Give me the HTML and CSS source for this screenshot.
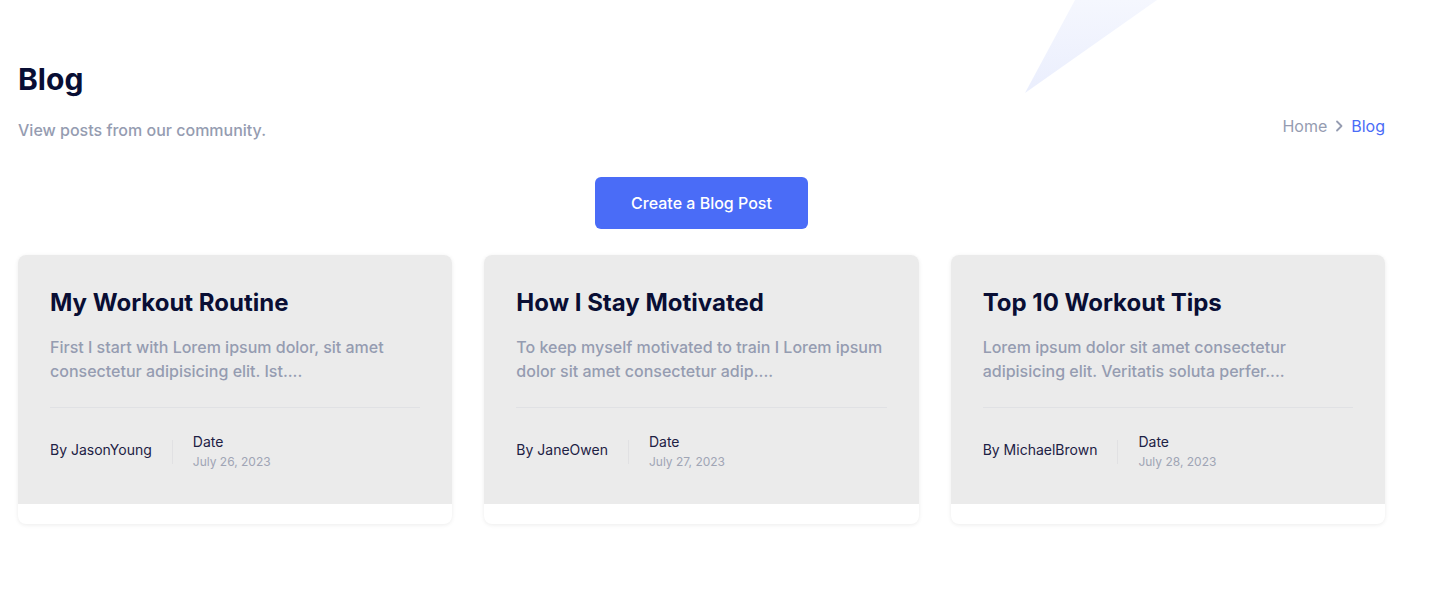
FILE: index.html
```html
<!DOCTYPE html>
<html lang="en">
<head>
<meta charset="utf-8">
<title>Blog</title>
<link rel="stylesheet" href="styles.css">
</head>
<body>
<svg class="deco" width="140" height="94" viewBox="0 0 140 94" aria-hidden="true">
  <defs>
    <linearGradient id="dg" x1="0" y1="0" x2="0" y2="1">
      <stop offset="0" stop-color="#f5f7fe"/>
      <stop offset="1" stop-color="#eaeefd"/>
    </linearGradient>
  </defs>
  <polygon points="0,93 50,0 132,0" fill="url(#dg)"/>
</svg>
<main class="page">
  <header class="head">
    <div class="head-text">
      <h1 class="title">Blog</h1>
      <p class="subtitle">View posts from our community.</p>
    </div>
    <nav class="crumbs">
      <a class="crumb" href="#">Home</a>
      <svg class="chev" width="8" height="12" viewBox="0 0 8 12" aria-hidden="true"><path d="M2 1.5 6.5 6 2 10.5" fill="none" stroke="#959cb1" stroke-width="1.8" stroke-linecap="round" stroke-linejoin="round"/></svg>
      <span class="crumb active">Blog</span>
    </nav>
  </header>
  <div class="actions">
    <a class="btn" href="#">Create a Blog Post</a>
  </div>
  <section class="grid">
    <article class="card">
      <div class="card-body">
        <h3 class="card-title">My Workout Routine</h3>
        <p class="card-text">First I start with Lorem ipsum dolor, sit amet consectetur adipisicing elit. Ist....</p>
        <div class="card-meta">
          <span class="author">By JasonYoung</span>
          <span class="sep"></span>
          <div class="date">
            <span class="date-label">Date</span>
            <span class="date-value">July 26, 2023</span>
          </div>
        </div>
      </div>
    </article>
    <article class="card">
      <div class="card-body">
        <h3 class="card-title">How I Stay Motivated</h3>
        <p class="card-text">To keep myself motivated to train I Lorem ipsum dolor sit amet consectetur adip....</p>
        <div class="card-meta">
          <span class="author">By JaneOwen</span>
          <span class="sep"></span>
          <div class="date">
            <span class="date-label">Date</span>
            <span class="date-value">July 27, 2023</span>
          </div>
        </div>
      </div>
    </article>
    <article class="card">
      <div class="card-body">
        <h3 class="card-title">Top 10 Workout Tips</h3>
        <p class="card-text">Lorem ipsum dolor sit amet consectetur adipisicing elit. Veritatis soluta perfer....</p>
        <div class="card-meta">
          <span class="author">By MichaelBrown</span>
          <span class="sep"></span>
          <div class="date">
            <span class="date-label">Date</span>
            <span class="date-value">July 28, 2023</span>
          </div>
        </div>
      </div>
    </article>
  </section>
</main>
</body>
</html>
```
FILE: styles.css
```css
* { box-sizing: border-box; }
html, body { margin: 0; padding: 0; background: #ffffff; }
body {
  font-family: Inter, "Noto Sans", "Liberation Sans", sans-serif;
  color: #090e34;
  position: relative;
  min-height: 602px;
  overflow: hidden;
}
.deco {
  position: absolute;
  left: 1025px;
  top: 0;
  z-index: 0;
}
.page {
  position: relative;
  z-index: 1;
  width: 1385px;
  padding: 61px 0 0 18px;
}
.head {
  display: flex;
  justify-content: space-between;
  align-items: flex-end;
}
.title {
  margin: 0 0 21px;
  font-size: 30px;
  line-height: 36px;
  font-weight: 700;
  color: #090e34;
}
.subtitle {
  margin: 0;
  font-size: 16px;
  line-height: 24px;
  font-weight: 500;
  color: #959cb1;
}
.crumbs {
  display: flex;
  align-items: center;
  gap: 8px;
  padding-bottom: 4px;
  font-size: 16px;
  line-height: 24px;
  font-weight: 400;
}
.crumb { color: #959cb1; text-decoration: none; }
.crumb.active { color: #4a6cf7; }
.chev { display: block; }
.actions {
  display: flex;
  justify-content: center;
  margin-top: 35px;
}
.btn {
  display: inline-block;
  background: #4a6cf7;
  color: #ffffff;
  text-decoration: none;
  font-size: 16px;
  font-weight: 500;
  line-height: 24px;
  padding: 14px 36px;
  border-radius: 6px;
}
.grid {
  display: grid;
  grid-template-columns: repeat(3, 1fr);
  gap: 32px;
  margin-top: 26px;
}
.card {
  background: #ffffff;
  border-radius: 8px;
  box-shadow: 0 1px 4px rgba(0, 0, 0, 0.08);
  padding-bottom: 20px;
  overflow: hidden;
}
.card-body {
  background: #ebebeb;
  padding: 32px 32px 32px;
}
.card-title {
  margin: 0 0 16px;
  font-size: 24px;
  line-height: 32px;
  font-weight: 700;
  color: #090e34;
}
.card-text {
  margin: 0 0 24px;
  padding-bottom: 24px;
  border-bottom: 1px solid #e0e1e4;
  font-size: 16px;
  line-height: 24px;
  font-weight: 500;
  color: #959cb1;
}
.card-meta {
  display: flex;
  align-items: flex-start;
}
.author {
  margin-top: 8px;
  font-size: 14px;
  line-height: 20px;
  color: #1d2144;
  padding-right: 20px;
}
.sep {
  margin-top: 8px;
  width: 1px;
  height: 24px;
  background: #e1e1e3;
  margin-right: 20px;
}
.date { display: flex; flex-direction: column; }
.date-label {
  font-size: 14px;
  line-height: 20px;
  color: #1d2144;
}
.date-value {
  font-size: 12px;
  line-height: 20px;
  color: #a0a5b5;
}
```
